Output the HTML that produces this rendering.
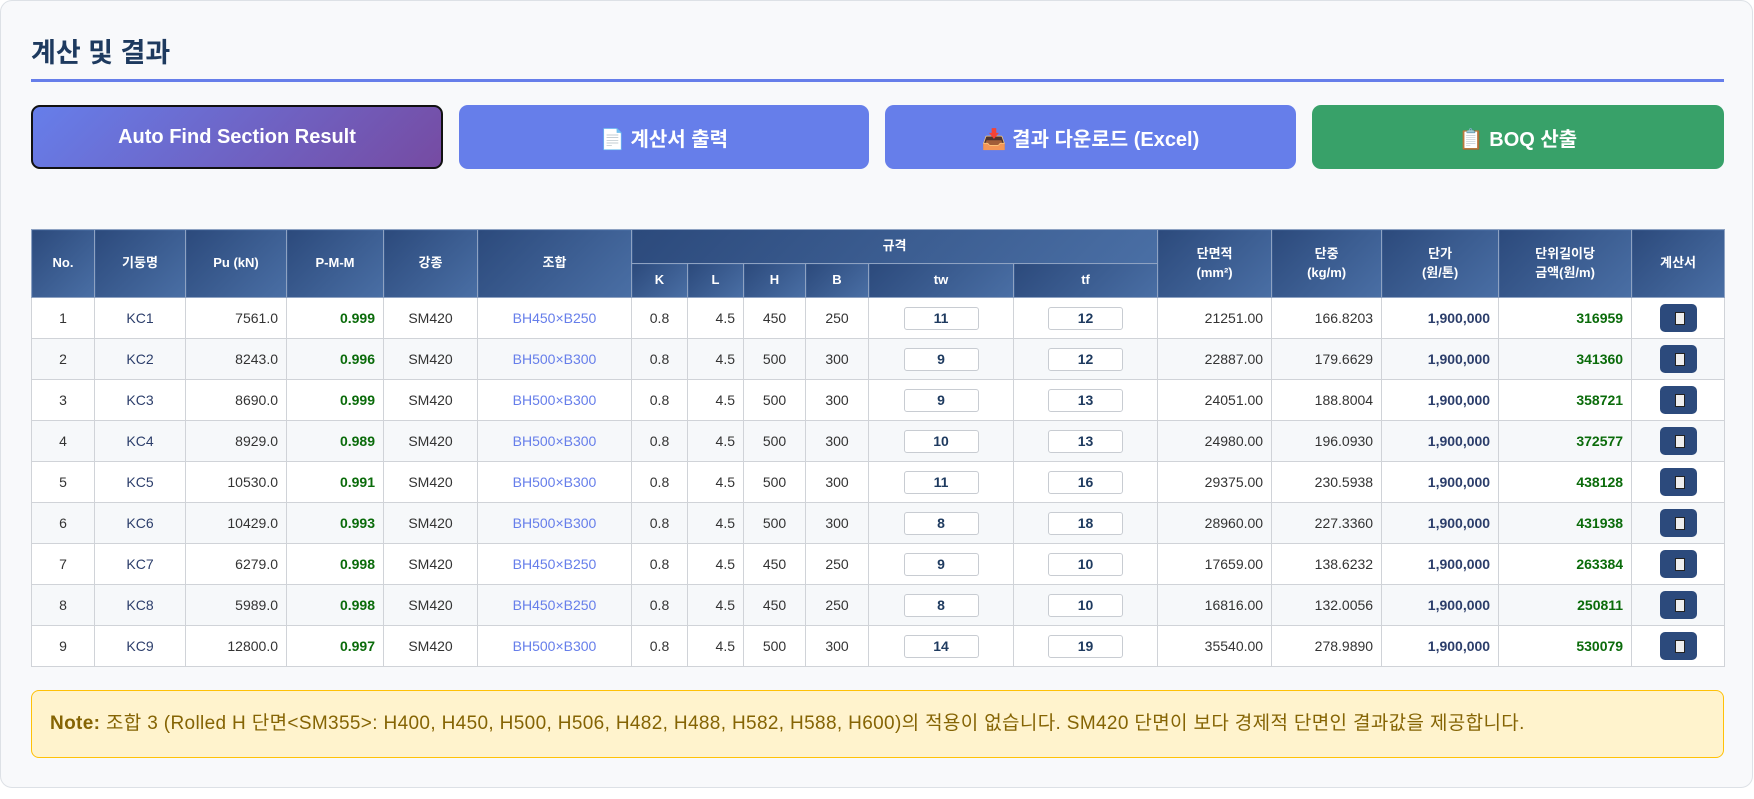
<!DOCTYPE html>
<html><head><meta charset="utf-8"><style>
*{box-sizing:border-box;margin:0;padding:0}
body{width:1754px;height:799px;background:#fff;font-family:"Liberation Sans","Noto Sans CJK KR",sans-serif;overflow:hidden}
.panel{position:absolute;left:0;top:0;width:1753px;height:788px;background:#f8f9fb;border:1px solid #dde1e6;border-radius:12px}
h2{position:absolute;left:31px;top:31px;font-size:27px;font-weight:bold;color:#1e3a5f}
.line{position:absolute;left:31px;top:79px;width:1693px;height:3px;background:#667eea}
.btn{position:absolute;top:105px;height:64px;border-radius:9px;color:#fff;font-weight:bold;font-size:20px;display:flex;align-items:center;justify-content:center;gap:6px}
table{position:absolute;left:31px;top:229px;width:1693px;border-collapse:collapse;table-layout:fixed;font-size:14px;background:#fff}
th{background:linear-gradient(135deg,#2c4a7c,#4a6fa5);color:#fff;font-weight:bold;font-size:13px;border:1px solid #8ea2c2;height:34px;line-height:1.4}
td{border:1px solid #d0d3d8;height:41px;color:#333;text-align:center;padding:0 8px}
tr:nth-child(even) td{background:#f6f8fa}
.r{text-align:right}
.g{color:#0a6b0a;font-weight:bold}
.b{color:#667eea}
.p{color:#2c3e6b;font-weight:bold}
.k{color:#2c3e6b}
.in{display:inline-block;width:75px;height:23px;border:1px solid #c8ccd2;border-radius:3px;background:#fff;font-weight:bold;color:#1e3a5f;line-height:21px;font-size:14px}
.ib{display:inline-block;width:37px;height:28px;background:#2c4a7c;border-radius:5px;position:relative;vertical-align:middle}
.ib:after{content:"";position:absolute;left:15px;top:8px;width:8px;height:11px;background:#eee;border:1px solid #222}
.note{position:absolute;left:31px;top:690px;width:1693px;height:68px;background:#fff3cd;border:1px solid #ffc107;border-radius:8px;color:#856404;font-size:19px;letter-spacing:0.35px;padding-left:18px;line-height:66px;white-space:nowrap}
</style></head><body>
<div class="panel"></div>
<h2>계산 및 결과</h2>
<div class="line"></div>
<div class="btn" style="left:31px;width:412px;background:linear-gradient(135deg,#667eea,#764ba2);border:2px solid #111">Auto Find Section Result</div>
<div class="btn" style="left:459px;width:410px;background:#667eea">📄 계산서 출력</div>
<div class="btn" style="left:885px;width:411px;background:#667eea">📥 결과 다운로드 (Excel)</div>
<div class="btn" style="left:1312px;width:412px;background:#38a169">📋 BOQ 산출</div>
<table>
<colgroup><col style="width:63px"><col style="width:91px"><col style="width:101px"><col style="width:97px"><col style="width:94px"><col style="width:154px"><col style="width:56px"><col style="width:56px"><col style="width:62px"><col style="width:63px"><col style="width:145px"><col style="width:144px"><col style="width:114px"><col style="width:110px"><col style="width:117px"><col style="width:133px"><col style="width:93px"></colgroup>
<tr><th rowspan="2">No.</th><th rowspan="2">기둥명</th><th rowspan="2">Pu (kN)</th><th rowspan="2">P-M-M</th><th rowspan="2">강종</th><th rowspan="2">조합</th><th colspan="6">규격</th><th rowspan="2">단면적<br>(mm²)</th><th rowspan="2">단중<br>(kg/m)</th><th rowspan="2">단가<br>(원/톤)</th><th rowspan="2">단위길이당<br>금액(원/m)</th><th rowspan="2">계산서</th></tr>
<tr><th>K</th><th>L</th><th>H</th><th>B</th><th>tw</th><th>tf</th></tr>
<tr><td>1</td><td class="k">KC1</td><td class="r">7561.0</td><td class="r g">0.999</td><td>SM420</td><td class="b">BH450×B250</td><td>0.8</td><td class="r">4.5</td><td>450</td><td>250</td><td><span class="in">11</span></td><td><span class="in">12</span></td><td class="r">21251.00</td><td class="r">166.8203</td><td class="r p">1,900,000</td><td class="r g">316959</td><td><span class="ib"></span></td></tr>
<tr><td>2</td><td class="k">KC2</td><td class="r">8243.0</td><td class="r g">0.996</td><td>SM420</td><td class="b">BH500×B300</td><td>0.8</td><td class="r">4.5</td><td>500</td><td>300</td><td><span class="in">9</span></td><td><span class="in">12</span></td><td class="r">22887.00</td><td class="r">179.6629</td><td class="r p">1,900,000</td><td class="r g">341360</td><td><span class="ib"></span></td></tr>
<tr><td>3</td><td class="k">KC3</td><td class="r">8690.0</td><td class="r g">0.999</td><td>SM420</td><td class="b">BH500×B300</td><td>0.8</td><td class="r">4.5</td><td>500</td><td>300</td><td><span class="in">9</span></td><td><span class="in">13</span></td><td class="r">24051.00</td><td class="r">188.8004</td><td class="r p">1,900,000</td><td class="r g">358721</td><td><span class="ib"></span></td></tr>
<tr><td>4</td><td class="k">KC4</td><td class="r">8929.0</td><td class="r g">0.989</td><td>SM420</td><td class="b">BH500×B300</td><td>0.8</td><td class="r">4.5</td><td>500</td><td>300</td><td><span class="in">10</span></td><td><span class="in">13</span></td><td class="r">24980.00</td><td class="r">196.0930</td><td class="r p">1,900,000</td><td class="r g">372577</td><td><span class="ib"></span></td></tr>
<tr><td>5</td><td class="k">KC5</td><td class="r">10530.0</td><td class="r g">0.991</td><td>SM420</td><td class="b">BH500×B300</td><td>0.8</td><td class="r">4.5</td><td>500</td><td>300</td><td><span class="in">11</span></td><td><span class="in">16</span></td><td class="r">29375.00</td><td class="r">230.5938</td><td class="r p">1,900,000</td><td class="r g">438128</td><td><span class="ib"></span></td></tr>
<tr><td>6</td><td class="k">KC6</td><td class="r">10429.0</td><td class="r g">0.993</td><td>SM420</td><td class="b">BH500×B300</td><td>0.8</td><td class="r">4.5</td><td>500</td><td>300</td><td><span class="in">8</span></td><td><span class="in">18</span></td><td class="r">28960.00</td><td class="r">227.3360</td><td class="r p">1,900,000</td><td class="r g">431938</td><td><span class="ib"></span></td></tr>
<tr><td>7</td><td class="k">KC7</td><td class="r">6279.0</td><td class="r g">0.998</td><td>SM420</td><td class="b">BH450×B250</td><td>0.8</td><td class="r">4.5</td><td>450</td><td>250</td><td><span class="in">9</span></td><td><span class="in">10</span></td><td class="r">17659.00</td><td class="r">138.6232</td><td class="r p">1,900,000</td><td class="r g">263384</td><td><span class="ib"></span></td></tr>
<tr><td>8</td><td class="k">KC8</td><td class="r">5989.0</td><td class="r g">0.998</td><td>SM420</td><td class="b">BH450×B250</td><td>0.8</td><td class="r">4.5</td><td>450</td><td>250</td><td><span class="in">8</span></td><td><span class="in">10</span></td><td class="r">16816.00</td><td class="r">132.0056</td><td class="r p">1,900,000</td><td class="r g">250811</td><td><span class="ib"></span></td></tr>
<tr><td>9</td><td class="k">KC9</td><td class="r">12800.0</td><td class="r g">0.997</td><td>SM420</td><td class="b">BH500×B300</td><td>0.8</td><td class="r">4.5</td><td>500</td><td>300</td><td><span class="in">14</span></td><td><span class="in">19</span></td><td class="r">35540.00</td><td class="r">278.9890</td><td class="r p">1,900,000</td><td class="r g">530079</td><td><span class="ib"></span></td></tr>
</table>
<div class="note"><b>Note:</b> 조합 3 (Rolled H 단면&lt;SM355&gt;: H400, H450, H500, H506, H482, H488, H582, H588, H600)의 적용이 없습니다. SM420 단면이 보다 경제적 단면인 결과값을 제공합니다.</div>
</body></html>
